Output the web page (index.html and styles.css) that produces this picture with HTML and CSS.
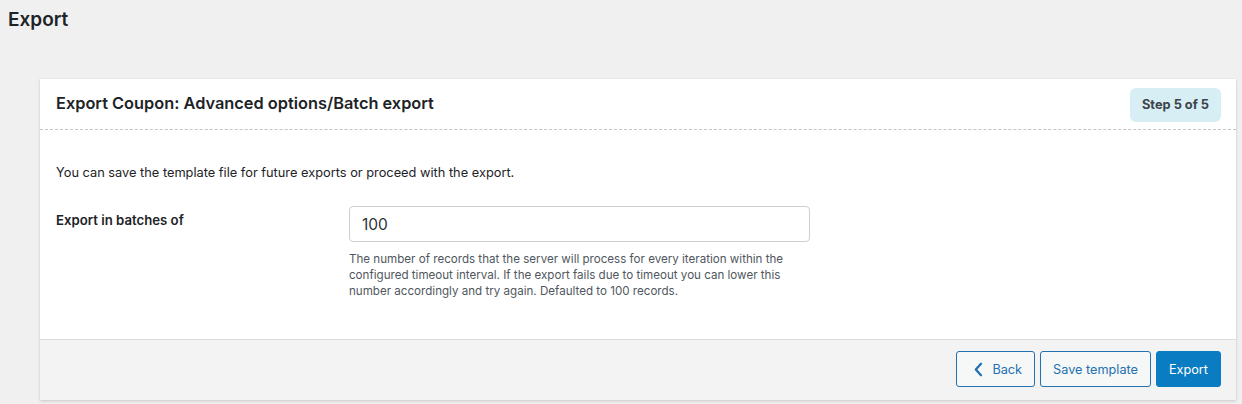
FILE: index.html
```html
<!DOCTYPE html>
<html>
<head>
<meta charset="utf-8">
<link rel="stylesheet" href="styles.css">
</head>
<body>
<div class="wrap">
  <h1 class="page-title">Export</h1>
  <div class="card">
    <div class="card-header">
      <h2 class="card-title">Export Coupon: Advanced options/Batch export</h2>
      <span class="step-badge">Step 5 of 5</span>
    </div>
    <div class="card-body">
      <p class="intro">You can save the template file for future exports or proceed with the export.</p>
      <div class="field-row">
        <label class="field-label">Export in batches of</label>
        <div class="field-control">
          <input class="text-input" type="text" value="100">
          <p class="field-desc">The number of records that the server will process for every iteration within the configured timeout interval. If the export fails due to timeout you can lower this number accordingly and try again. Defaulted to 100 records.</p>
        </div>
      </div>
    </div>
    <div class="card-footer">
      <button class="btn btn-secondary btn-back"><svg class="chev" width="9" height="15" viewBox="0 0 9 15"><path d="M7 1.8 L1.8 7.5 L7 13.2" fill="none" stroke="currentColor" stroke-width="2.3" stroke-linecap="round" stroke-linejoin="round"/></svg>Back</button>
      <button class="btn btn-secondary">Save template</button>
      <button class="btn btn-primary">Export</button>
    </div>
  </div>
</div>
</body>
</html>
```
FILE: styles.css
```css
* { box-sizing: border-box; }
html, body { margin: 0; padding: 0; }
body {
  background: #f0f0f1;
  font-family: Inter, "Noto Sans", Roboto, sans-serif;
  color: #1d2327;
  font-size: 13px;
  width: 1242px;
  height: 404px;
  overflow: hidden;
}
.wrap { padding: 0 6px 0 8px; }
.page-title {
  margin: 0;
  padding: 9px 0 0 0;
  font-size: 19px;
  font-weight: 600;
  line-height: 22px;
  color: #1d2327;
}
.card {
  margin: 48px 0 0 32px;
  background: #fff;
  box-shadow: 0 1px 3px rgba(0,0,0,0.18);
}
.card-header {
  display: flex;
  align-items: flex-start;
  justify-content: space-between;
  padding: 9px 15px 0 16px;
  height: 51px;
  border-bottom: 1px dashed #c3c4c7;
}
.card-title {
  margin: 5px 0 0 0;
  font-size: 16.35px;
  font-weight: 600;
  line-height: 20px;
  color: #1d2327;
}
.step-badge {
  background: #d7eef4;
  border-radius: 6px;
  padding: 0 12px;
  height: 34px;
  line-height: 34px;
  font-size: 12.8px;
  font-weight: 700;
  color: #3c434a;
}
.card-body {
  padding: 34px 16px 40px 16px;
}
.intro {
  margin: 0 0 24px 0;
  font-size: 12.8px;
  line-height: 18px;
  color: #1d2327;
}
.field-row {
  display: flex;
  align-items: flex-start;
}
.field-label {
  width: 293px;
  flex: none;
  font-size: 13.2px;
  font-weight: 600;
  padding-top: 5px;
  line-height: 18px;
}
.field-control { width: 462px; }
.text-input {
  display: block;
  width: 461px;
  height: 36px;
  border: 1px solid #cfcfd2;
  border-radius: 4px;
  padding: 0 12px;
  font-family: inherit;
  font-size: 15.5px;
  color: #2c3338;
  background: #fff;
}
.field-desc {
  margin: 9px 0 0 0;
  font-size: 11.6px;
  line-height: 16px;
  color: #50575e;
  width: 472px;
}
.card-footer {
  display: flex;
  justify-content: flex-end;
  gap: 5px;
  background: #f3f3f3;
  border-top: 1px solid #dcdcde;
  padding: 11px 15px 13px 15px;
}
.btn {
  height: 36px;
  border-radius: 3px;
  font-family: inherit;
  font-size: 12.7px;
  padding: 0 12px;
  display: inline-flex;
  align-items: center;
  cursor: pointer;
}
.btn-secondary {
  background: #f6f7f7;
  border: 1px solid #2271b1;
  color: #2271b1;
}
.btn-primary {
  background: #0a7cc1;
  border: 1px solid #0a7cc1;
  color: #fff;
}
.btn-back { padding-left: 17px; padding-right: 12px; }
.chev { margin-right: 9px; }
```
